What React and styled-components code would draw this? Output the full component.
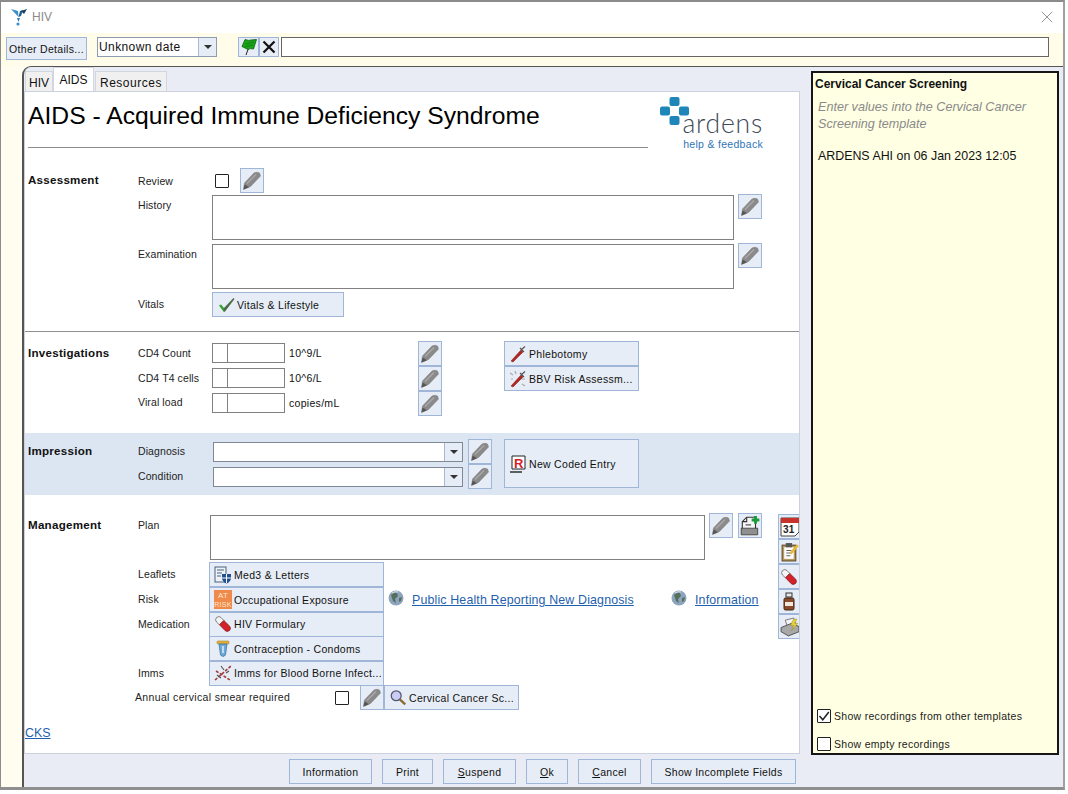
import styled, { createGlobalStyle } from "styled-components";
import { X } from "lucide-react";

const Global = createGlobalStyle`
  html, body { margin: 0; padding: 0; background: #fff; }
  body { font-family: "Liberation Sans", Arial, sans-serif; color: #111; }
`;

const Window = styled.div`
  width: 1065px;
  height: 790px;
  box-sizing: border-box;
  border-top: 2px solid #8b8b8b;
  border-left: 1px solid #8b8b8b;
  border-right: 2px solid #a0a0a0;
  border-bottom: 3px solid #8f8f8f;
  display: flex;
  flex-direction: column;
  overflow: hidden;
`;
const TitleBar = styled.div`
  box-sizing: border-box;
  height: 31px;
  flex: none;
  background: #fff;
  display: flex;
  align-items: center;
  padding: 0 6px 2px 9px;
  color: #8a8a8a;
  font-size: 12px;
  gap: 4px;
`;
const CloseIcon = styled(X)`
  margin-left: auto;
  color: #8c8c8c;
`;
const Toolbar = styled.div`
  box-sizing: border-box;
  height: 33px;
  flex: none;
  background: #fffdea;
  display: flex;
  align-items: flex-start;
  padding: 4px 0 0 5px;
`;
const Btn = styled.div`
  box-sizing: border-box;
  width: ${(p) => p.$w || 135}px;
  height: ${(p) => p.$h || 25}px;
  flex: none;
  background: #e7edf6;
  border: 1px solid #9fb6d8;
  display: flex;
  align-items: center;
  justify-content: ${(p) => (p.$center ? "center" : "flex-start")};
  gap: 2px;
  padding: ${(p) => (p.$center ? "0" : "0 0 0 4px")};
  font-size: 10.5px;
  letter-spacing: 0.3px;
  white-space: nowrap;
  overflow: hidden;
`;
const IconSlot = styled.span`
  width: 18px;
  flex: none;
  display: flex;
  align-items: center;
  justify-content: center;
`;
const IconBtn = styled(Btn)`
  width: ${(p) => p.$w || 24}px;
  height: ${(p) => p.$h || 25}px;
  justify-content: center;
  padding: 0;
  margin-left: ${(p) => p.$ml || 0}px;
  margin-top: ${(p) => p.$mt || 0}px;
`;
const DateCombo = styled.div`
  box-sizing: border-box;
  width: 120px;
  height: 20px;
  margin-left: 10px;
  border: 1px solid #8f9bb0;
  background: #fff;
  display: flex;
  align-items: center;
  padding-left: 1px;
  font-size: 12px;
  letter-spacing: 0.4px;
`;
const ComboBox = styled.div`
  box-sizing: border-box;
  width: 250px;
  height: 20px;
  margin: 3px 0 0 1px;
  border: 1px solid #7f8896;
  background: #fff;
  display: flex;
  justify-content: flex-end;
`;
const ComboArrow = styled.div`
  box-sizing: border-box;
  width: 18px;
  align-self: stretch;
  background: #e7edf6;
  border-left: 1px solid #a9b9d2;
  display: flex;
  align-items: center;
  justify-content: center;
  margin-left: auto;
  &::after {
    content: "";
    border-left: 4px solid transparent;
    border-right: 4px solid transparent;
    border-top: 4px solid #333;
  }
`;
const ToolbarInput = styled.div`
  box-sizing: border-box;
  width: 768px;
  height: 20px;
  margin-left: 2px;
  border: 1px solid #666;
  background: #fff;
`;
const Main = styled.div`
  flex: 1;
  min-height: 0;
  display: flex;
  background: #fffdf0;
  padding-left: 21px;
`;
const Pane = styled.div`
  flex: 1;
  background: #e9ecf4;
  border-top: 1px solid #555;
  border-left: 2px solid #555;
  border-top-left-radius: 9px;
  display: flex;
  flex-direction: column;
`;
const PaneBody = styled.div`
  flex: 1;
  min-height: 0;
  display: flex;
`;
const FormColumn = styled.div`
  width: 776px;
  flex: none;
  display: flex;
  flex-direction: column;
`;
const TabRow = styled.div`
  height: 24px;
  flex: none;
  display: flex;
  align-items: flex-end;
  padding-left: 1px;
`;
const Tab = styled.div`
  box-sizing: border-box;
  height: ${(p) => (p.$active ? 24 : 20)}px;
  padding: ${(p) => (p.$active ? 0 : 2)}px ${(p) => p.$pad || 3}px 0;
  margin-right: ${(p) => (p.$gap ? 1 : 0)}px;
  background: ${(p) => (p.$active ? "#fff" : "#f0f0f0")};
  border: 1px solid #d2d6df;
  border-bottom: none;
  font-size: 12px;
  letter-spacing: ${(p) => p.$ls || 0}px;
  display: flex;
  align-items: center;
`;
const FormPage = styled.div`
  flex: 1;
  min-height: 0;
  background: #fff;
  border: 1px solid #cbd1df;
  overflow: hidden;
`;
const Header = styled.div`
  display: flex;
  align-items: flex-start;
  height: 59px;
  padding-left: 3px;
`;
const HeadTitle = styled.div`
  box-sizing: border-box;
  width: 620px;
  height: 56px;
  border-bottom: 1px solid #8c8c8c;
  font-size: 24.7px;
  line-height: 47px;
  color: #000;
  white-space: nowrap;
`;
const Logo = styled.div`
  position: relative;
  width: 104px;
  height: 54px;
  margin: 5px 0 0 11px;
  text-align: right;
`;
const LogoMark = styled.svg`
  position: absolute;
  left: 1px;
  top: 0;
`;
const LogoWord = styled.div`
  padding-top: 13px;
  font-family: "Lato", "Liberation Sans", sans-serif;
  font-weight: 300;
  font-size: 26.5px;
  line-height: 27px;
  letter-spacing: 0.8px;
  color: #3d4a55;
`;
const LogoLink = styled.div`
  margin-top: 1px;
  font-size: 10.5px;
  line-height: 12px;
  letter-spacing: 0.3px;
  color: #2f74b5;
`;
const Section = styled.div`
  display: flex;
  align-items: flex-start;
  padding: ${(p) => p.$pt || 0}px 0 ${(p) => p.$pb || 0}px 3px;
  margin-top: ${(p) => p.$mt || 0}px;
  background: ${(p) => p.$bg || "transparent"};
  border-top: ${(p) => (p.$rule ? "1px solid #8f8f8f" : "none")};
`;
const SectionLabel = styled.div`
  width: 110px;
  flex: none;
  font-size: 11.6px;
  font-weight: bold;
  line-height: 24px;
  letter-spacing: 0.25px;
`;
const Body = styled.div`
  display: flex;
  flex-direction: column;
  width: ${(p) => p.$w || 640}px;
  flex: none;
`;
const Row = styled.div`
  display: flex;
  align-items: flex-start;
  height: ${(p) => p.$h || 25}px;
  margin-top: ${(p) => p.$mt || 0}px;
`;
const RowLabel = styled.div`
  width: ${(p) => p.$w || 74}px;
  margin-left: ${(p) => p.$ml || 0}px;
  flex: none;
  font-size: 10.5px;
  line-height: ${(p) => p.$lh || 24}px;
  letter-spacing: ${(p) => p.$ls || 0.1}px;
  white-space: nowrap;
  color: #222;
`;
const Check = styled.div`
  box-sizing: border-box;
  width: 14px;
  height: 14px;
  flex: none;
  margin: ${(p) => p.$mt ?? 6}px 0 0 ${(p) => p.$ml || 0}px;
  border: 1px solid #222;
  border-radius: 1px;
  background: #fff;
  display: flex;
  align-items: center;
  justify-content: center;
`;
const TextBox = styled.div`
  box-sizing: border-box;
  width: ${(p) => p.$w}px;
  height: 45px;
  flex: none;
  margin-top: ${(p) => p.$mt || 0}px;
  border: 1px solid #808080;
  background: #fff;
`;
const ValueBox = styled.div`
  display: flex;
  margin-top: 2px;
  flex: none;
`;
const ValueCell = styled.div`
  box-sizing: border-box;
  width: ${(p) => p.$w}px;
  height: 20px;
  border: 1px solid #808080;
  margin-left: ${(p) => (p.$joined ? -1 : 0)}px;
  background: #fff;
`;
const Unit = styled.div`
  width: 129px;
  margin-left: 4px;
  flex: none;
  font-size: 10.5px;
  line-height: 25px;
  letter-spacing: 0.3px;
`;
const ButtonStack = styled.div`
  display: flex;
  flex-direction: column;
`;
const NewEntry = styled(Btn)`
  margin-left: 12px;
`;
const SideIcons = styled.div`
  display: flex;
  flex-direction: column;
  width: 24px;
  flex: none;
  margin-top: 1px;
`;
const SideButton = styled(IconBtn)`
  justify-content: flex-start;
  padding-left: 1px;
`;
const Globe = styled.svg`
  flex: none;
  margin-top: 3px;
  margin-left: ${(p) => p.$ml || 0}px;
`;
const Link = styled.a`
  font-size: 12.4px;
  line-height: 27px;
  letter-spacing: 0.15px;
  margin-left: 8px;
  width: ${(p) => p.$w || "auto"};
  color: #1f5fae;
  text-decoration: underline;
  white-space: nowrap;
`;
const CksLink = styled(Link)`
  display: block;
  margin: 13px 0 0;
  line-height: 20px;
  letter-spacing: 0;
`;
const SidePanel = styled.div`
  box-sizing: border-box;
  width: 248px;
  height: 684px;
  margin: 4px 0 0 11px;
  flex: none;
  border: 2px solid #151515;
  background: #ffffe3;
  display: flex;
  flex-direction: column;
  padding: 3px 2px 4px 2px;
`;
const PanelTitle = styled.div`
  font-size: 12px;
  font-weight: bold;
  line-height: 16px;
`;
const PanelHint = styled.div`
  font-size: 12.6px;
  font-style: italic;
  line-height: 16.5px;
  color: #8a8a8a;
  margin: 7px 0 0 3px;
  width: 235px;
`;
const PanelEntry = styled.div`
  font-size: 12.4px;
  line-height: 16px;
  margin: 16px 0 0 3px;
  color: #111;
`;
const PanelOption = styled.label`
  display: flex;
  align-items: center;
  gap: 3px;
  font-size: 10.5px;
  letter-spacing: 0.3px;
  height: 14px;
  margin-top: ${(p) => p.$mt}px;
  margin-left: 2px;
  color: #222;
`;
const Footer = styled.div`
  width: 776px;
  height: 33px;
  flex: none;
  box-sizing: border-box;
  display: flex;
  justify-content: flex-end;
  gap: 10px;
  padding: 5px 4px 0 0;
`;

const LabelBtn = ({ icon, children, ...rest }) => (
  <Btn {...rest}>
    <IconSlot>{icon}</IconSlot>
    {children}
  </Btn>
);

const Pencil = () => (
  <svg width="20" height="20" viewBox="0 0 20 20">
    <path d="M1.5 18.5 L2.5 12 L12 2 Q15 0.5 17.5 2 L18.5 5 L8.5 15.5 Z" fill="#8a8a8a" stroke="#757575" strokeWidth="0.5" />
    <path d="M1.5 18.5 L2.6 13.5 L7 16.3 Z" fill="#555" />
    <path d="M5 12.5 L14 3.5" stroke="#ababab" strokeWidth="1.2" />
  </svg>
);
const FunnelLogo = () => (
  <svg width="18" height="20" viewBox="0 0 18 20">
    <path d="M1 2 L8 4 L8.5 10 Z" fill="#3d8fc9" />
    <path d="M8.5 10 L10 4 L13 3 L11 9 Z" fill="#1f5f96" />
    <path d="M7 11 L10 11 L8.5 15 Z" fill="#2b7db8" />
    <circle cx="8" cy="17" r="1.6" fill="#3d8fc9" />
    <path d="M11 4 L17 2 L14 7 Z" fill="#16405f" />
  </svg>
);
const Flag = () => (
  <svg width="18" height="18" viewBox="0 0 18 18">
    <path d="M5 1.5 Q9 3 11 2 L16.5 1.5 L13.5 11 Q10 10 8 11.5 L2 8.5 Z" fill="#19a519" stroke="#0c5a0c" strokeWidth="0.8" />
    <path d="M5.5 6 L14 4 M5 8.5 L13 7" stroke="#0f7a0f" strokeWidth="0.8" />
    <path d="M8 11.5 L6 17" stroke="#222" strokeWidth="1" />
  </svg>
);
const BlackX = () => (
  <svg width="16" height="16" viewBox="0 0 16 16">
    <path d="M2.5 2.5 L13.5 13.5 M13.5 2.5 L2.5 13.5" stroke="#111" strokeWidth="2.2" />
  </svg>
);
const Tick = () => (
  <svg width="17" height="16" viewBox="0 0 17 16">
    <path d="M1 8.5 L3 7.5 L6 11 L7 14.5 L5.5 14.5 Z" fill="#37a02e" />
    <path d="M5.5 14.5 L7 14.5 L16.5 2 L15.5 1 L6 11 Z" fill="#4b6a48" />
  </svg>
);
const SmallTick = () => (
  <svg width="12" height="12" viewBox="0 0 12 12">
    <path d="M1.5 6 L4.8 9.8 L10.8 2" fill="none" stroke="#222" strokeWidth="1.5" />
  </svg>
);
const Syringe = ({ dots }) => (
  <svg width="18" height="18" viewBox="0 0 18 18">
    {dots && <path d="M1 3 L4 5 M6 1 L7 4 M13 14 L16 16 M12 9 L16 9 M2 9 L4 9" stroke="#aaa" strokeWidth="1.2" />}
    <path d="M2 16 L12 5 L14 7 L4 17 Z" fill="#b3261e" stroke="#7c1712" strokeWidth="0.5" />
    <path d="M12 5 L16 1.5 M11 3 L15 7" stroke="#555" strokeWidth="1.2" />
  </svg>
);
const CodedR = () => (
  <svg width="18" height="20" viewBox="0 0 18 20">
    <path d="M3 2 H16 V15 H3 Z" fill="#fff" stroke="#222" />
    <path d="M1 18 H13" stroke="#222" strokeWidth="1.4" />
    <text x="5" y="14" fontFamily="Liberation Sans" fontWeight="bold" fontSize="13" fill="#d3222a">R</text>
  </svg>
);
const Med3 = () => (
  <svg width="18" height="18" viewBox="0 0 18 18">
    <rect x="1" y="1" width="11" height="15" fill="#eef2f7" stroke="#47627f" />
    <path d="M3 4 H10 M3 7 H8 M3 10 H7" stroke="#47627f" />
    <path d="M8 8 H17 V13 Q15 17 12.5 17.5 Q10 17 8 13 Z" fill="#1f4f8f" />
    <path d="M12.5 8 V17 M8 12 H17" stroke="#fff" />
  </svg>
);
const AtRisk = () => (
  <svg width="18" height="19" viewBox="0 0 18 19">
    <rect width="18" height="19" fill="#ef8a4a" />
    <text x="9" y="8" textAnchor="middle" fontFamily="Liberation Sans" fontSize="8" fill="#ffe6d2">AT</text>
    <text x="9" y="17" textAnchor="middle" fontFamily="Liberation Sans" fontSize="7" fill="#ffe6d2">RISK</text>
  </svg>
);
const Pill = () => (
  <svg width="18" height="18" viewBox="0 0 18 18">
    <path d="M2.5 2.5 Q5 0.5 7 2.5 L9.8 5.5 L5.5 9.8 L2.5 7 Q0.5 5 2.5 2.5 Z" fill="#f4f4f4" stroke="#555" strokeWidth="0.7" />
    <path d="M9.8 5.5 L15.5 11 Q17.5 13.5 15.5 15.5 Q13 17.5 11 15.5 L5.5 9.8 Z" fill="#d3222a" stroke="#7c1712" strokeWidth="0.7" />
  </svg>
);
const Condom = () => (
  <svg width="16" height="18" viewBox="0 0 16 18">
    <rect x="2" y="1" width="12" height="3" rx="1" fill="#e3b23c" stroke="#96741f" strokeWidth="0.5" />
    <path d="M4 4 H12 L10.5 15 Q8 18 5.5 15 Z" fill="#6fa9d8" stroke="#2e6a9e" strokeWidth="0.7" />
    <path d="M8 6 V13" stroke="#e8f3fb" strokeWidth="1.4" />
  </svg>
);
const Imms = () => (
  <svg width="18" height="18" viewBox="0 0 18 18">
    <path d="M1 16 L17 2 M2 7 L16 16" stroke="#a43b3b" strokeWidth="1.6" strokeDasharray="3 1.5" />
    <path d="M7 2 L10 6 M12 9 L15 7 M3 11 L7 14" stroke="#555" strokeWidth="1.1" />
  </svg>
);
const Magnifier = () => (
  <svg width="20" height="20" viewBox="0 0 20 20">
    <circle cx="8" cy="7.5" r="5.5" fill="#c9cdf5" stroke="#55586e" strokeWidth="1.4" />
    <path d="M12 11.5 L18 17" stroke="#8a6a2d" strokeWidth="2.6" />
  </svg>
);
const GlobeIcon = ({ ml }) => (
  <Globe $ml={ml} width="16" height="16" viewBox="0 0 16 16">
    <circle cx="8" cy="8" r="7.5" fill="#8ea3bd" />
    <path d="M3 5 Q6 2 9 3 L10 6 L7 9 L8 13 L5 11 Z M11 8 L14 7 L13 11 L11 12 Z" fill="#55705a" />
    <path d="M4 3 Q7 1 10 2" stroke="#d9e2ee" fill="none" />
  </Globe>
);
const Calendar = () => (
  <svg width="20" height="20" viewBox="0 0 20 20">
    <path d="M1 1 H19 V15 L15 19 H1 Z" fill="#fff" stroke="#444" />
    <rect x="1" y="1" width="18" height="5" fill="#c8332b" />
    <text x="3" y="16" fontFamily="Liberation Sans" fontWeight="bold" fontSize="10" fill="#222">31</text>
  </svg>
);
const Clipboard = () => (
  <svg width="20" height="20" viewBox="0 0 19 19">
    <rect x="2" y="3" width="13" height="15" fill="#b99a62" stroke="#5c4a28" />
    <rect x="4" y="5" width="9" height="11" fill="#fff" />
    <rect x="5.5" y="1" width="6" height="4" fill="#555" />
    <path d="M6 8 H11 M6 10.5 H11 M6 13 H10" stroke="#666" />
    <path d="M10 11 L17 3" stroke="#e8b93a" strokeWidth="2.4" />
  </svg>
);
const Bottle = () => (
  <svg width="18" height="19" viewBox="0 0 18 19">
    <rect x="6" y="1" width="6" height="4" fill="#e9e9e9" stroke="#333" />
    <rect x="4" y="6" width="10" height="12" rx="1.5" fill="#8a4b2d" stroke="#3d2214" />
    <rect x="5" y="10" width="8" height="4" fill="#f2e7da" />
  </svg>
);
const Printer = () => (
  <svg width="20" height="20" viewBox="0 0 19 19">
    <path d="M5 3 L13 1 L15 7 L7 9 Z" fill="#f4f4f4" stroke="#555" strokeWidth="0.7" />
    <path d="M1 10 L11 6 L18 9 V14 L8 18 L1 14 Z" fill="#a8a8a8" stroke="#444" strokeWidth="0.8" />
    <path d="M13 2 L10 8 H13 L11 13 L17 6 H14 L16 2 Z" fill="#e8d43a" stroke="#8b7d1d" strokeWidth="0.4" />
  </svg>
);
const AddDoc = () => (
  <svg width="22" height="22" viewBox="0 0 20 20">
    <path d="M3 6 L7 2 H15 V16 H3 Z" fill="#f6f6f6" stroke="#333" />
    <path d="M3 6 H7 V2" fill="none" stroke="#333" />
    <path d="M2 12 H17 V18 H2 Z" fill="#8f8f8f" stroke="#333" strokeWidth="0.7" />
    <path d="M6 9 H11" stroke="#444" />
    <path d="M15 1 V8 M11.5 4.5 H18.5" stroke="#1d9a3c" strokeWidth="2.6" />
  </svg>
);

export default function App() {
  return (
    <>
      <Global />
      <Window>
        <TitleBar>
          <FunnelLogo />
          HIV
          <CloseIcon size={20} strokeWidth={1.1} />
        </TitleBar>
        <Toolbar>
          <Btn $w={81} $h={23} $center>Other Details...</Btn>
          <DateCombo>
            Unknown date
            <ComboArrow />
          </DateCombo>
          <IconBtn $w={21} $h={20} $ml={21}><Flag /></IconBtn>
          <IconBtn $w={20} $h={20}><BlackX /></IconBtn>
          <ToolbarInput />
        </Toolbar>
        <Main>
          <Pane>
            <PaneBody>
              <FormColumn>
                <TabRow>
                  <Tab>HIV</Tab>
                  <Tab $active $gap $pad={5.5}>AIDS</Tab>
                  <Tab $pad={4} $ls={0.5}>Resources</Tab>
                </TabRow>
                <FormPage>
                  <Header>
                    <HeadTitle>AIDS - Acquired Immune Deficiency Syndrome</HeadTitle>
                    <Logo>
                      <LogoMark width="29" height="29" viewBox="0 0 29 29">
                        <rect x="9.5" y="0" width="10" height="9" rx="2" fill="#1f86ba" />
                        <rect x="0" y="9.5" width="10" height="9" rx="2" fill="#1f86ba" />
                        <rect x="19" y="9.5" width="10" height="9" rx="2" fill="#1f86ba" />
                        <rect x="9.5" y="19" width="10" height="9" rx="2" fill="#1f86ba" />
                      </LogoMark>
                      <LogoWord>ardens</LogoWord>
                      <LogoLink>help &amp; feedback</LogoLink>
                    </Logo>
                  </Header>

                  <Section $pt={17}>
                    <SectionLabel>Assessment</SectionLabel>
                    <Body>
                      <Row>
                        <RowLabel $lh={26}>Review</RowLabel>
                        <Check $ml={3} />
                        <IconBtn $ml={11}><Pencil /></IconBtn>
                      </Row>
                      <Row $h={49} $mt={1}>
                        <RowLabel $lh={22}>History</RowLabel>
                        <TextBox $w={522} $mt={1} />
                        <IconBtn $ml={4}><Pencil /></IconBtn>
                      </Row>
                      <Row $h={48}>
                        <RowLabel $lh={22}>Examination</RowLabel>
                        <TextBox $w={522} $mt={1} />
                        <IconBtn $ml={4}><Pencil /></IconBtn>
                      </Row>
                      <Row $mt={1}>
                        <RowLabel>Vitals</RowLabel>
                        <LabelBtn $w={132} icon={<Tick />}>Vitals &amp; Lifestyle</LabelBtn>
                      </Row>
                    </Body>
                  </Section>

                  <Section $rule $mt={14} $pt={9}>
                    <SectionLabel>Investigations</SectionLabel>
                    <Body $w={366}>
                      <Row>
                        <RowLabel>CD4 Count</RowLabel>
                        <ValueBox><ValueCell $w={16} /><ValueCell $w={58} $joined /></ValueBox>
                        <Unit>10^9/L</Unit>
                        <IconBtn><Pencil /></IconBtn>
                      </Row>
                      <Row>
                        <RowLabel>CD4 T4 cells</RowLabel>
                        <ValueBox><ValueCell $w={16} /><ValueCell $w={58} $joined /></ValueBox>
                        <Unit>10^6/L</Unit>
                        <IconBtn><Pencil /></IconBtn>
                      </Row>
                      <Row>
                        <RowLabel $lh={22}>Viral load</RowLabel>
                        <ValueBox><ValueCell $w={16} /><ValueCell $w={58} $joined /></ValueBox>
                        <Unit>copies/mL</Unit>
                        <IconBtn><Pencil /></IconBtn>
                      </Row>
                    </Body>
                    <ButtonStack>
                      <LabelBtn icon={<Syringe />}>Phlebotomy</LabelBtn>
                      <LabelBtn icon={<Syringe dots />}>BBV Risk Assessm...</LabelBtn>
                    </ButtonStack>
                  </Section>

                  <Section $mt={17} $pt={6} $pb={6} $bg="#dce6f2">
                    <SectionLabel>Impression</SectionLabel>
                    <Body $w={354}>
                      <Row>
                        <RowLabel>Diagnosis</RowLabel>
                        <ComboBox><ComboArrow /></ComboBox>
                        <IconBtn $ml={5}><Pencil /></IconBtn>
                      </Row>
                      <Row>
                        <RowLabel>Condition</RowLabel>
                        <ComboBox><ComboArrow /></ComboBox>
                        <IconBtn $ml={5}><Pencil /></IconBtn>
                      </Row>
                    </Body>
                    <NewEntry $h={49}><IconSlot><CodedR /></IconSlot>New Coded Entry</NewEntry>
                  </Section>

                  <Section $mt={18}>
                    <SectionLabel>Management</SectionLabel>
                    <Body>
                      <Row $h={49}>
                        <RowLabel $w={72}>Plan</RowLabel>
                        <TextBox $w={495} $mt={2} />
                        <IconBtn $ml={4}><Pencil /></IconBtn>
                        <IconBtn $ml={5}><AddDoc /></IconBtn>
                      </Row>
                      <Row>
                        <RowLabel $w={71}>Leaflets</RowLabel>
                        <LabelBtn $w={175} icon={<Med3 />}>Med3 &amp; Letters</LabelBtn>
                      </Row>
                      <Row $h={24.6}>
                        <RowLabel $w={71}>Risk</RowLabel>
                        <LabelBtn $w={175} icon={<AtRisk />}>Occupational Exposure</LabelBtn>
                        <GlobeIcon ml={4} />
                        <Link $w="259px">Public Health Reporting New Diagnosis</Link>
                        <GlobeIcon />
                        <Link>Information</Link>
                      </Row>
                      <Row $h={24.6}>
                        <RowLabel $w={71}>Medication</RowLabel>
                        <LabelBtn $w={175} icon={<Pill />}>HIV Formulary</LabelBtn>
                      </Row>
                      <Row $h={24.6}>
                        <RowLabel $w={71} />
                        <LabelBtn $w={175} icon={<Condom />}>Contraception - Condoms</LabelBtn>
                      </Row>
                      <Row $h={24.6}>
                        <RowLabel $w={71}>Imms</RowLabel>
                        <LabelBtn $w={175} icon={<Imms />}>Imms for Blood Borne Infect...</LabelBtn>
                      </Row>
                      <Row>
                        <RowLabel $w={200} $ml={-3} $ls={0.35}>Annual cervical smear required</RowLabel>
                        <Check />
                        <IconBtn $ml={11}><Pencil /></IconBtn>
                        <LabelBtn $w={135} icon={<Magnifier />}>Cervical Cancer Sc...</LabelBtn>
                      </Row>
                    </Body>
                    <SideIcons>
                      <SideButton><Calendar /></SideButton>
                      <SideButton><Clipboard /></SideButton>
                      <SideButton><Pill /></SideButton>
                      <SideButton><Bottle /></SideButton>
                      <SideButton><Printer /></SideButton>
                    </SideIcons>
                  </Section>
                  <CksLink>CKS</CksLink>
                </FormPage>
              </FormColumn>
              <SidePanel>
                <PanelTitle>Cervical Cancer Screening</PanelTitle>
                <PanelHint>Enter values into the Cervical Cancer Screening template</PanelHint>
                <PanelEntry>ARDENS AHI on 06 Jan 2023 12:05</PanelEntry>
                <PanelOption $mt={545}>
                  <Check $mt={0}><SmallTick /></Check>
                  Show recordings from other templates
                </PanelOption>
                <PanelOption $mt={14}>
                  <Check $mt={0} />
                  Show empty recordings
                </PanelOption>
              </SidePanel>
            </PaneBody>
            <Footer>
              <Btn $w={83} $center>Information</Btn>
              <Btn $w={51} $center>Print</Btn>
              <Btn $w={73} $center><span><u>S</u>uspend</span></Btn>
              <Btn $w={42} $center><span><u>O</u>k</span></Btn>
              <Btn $w={63} $center><span><u>C</u>ancel</span></Btn>
              <Btn $w={145} $center>Show Incomplete Fields</Btn>
            </Footer>
          </Pane>
        </Main>
      </Window>
    </>
  );
}
